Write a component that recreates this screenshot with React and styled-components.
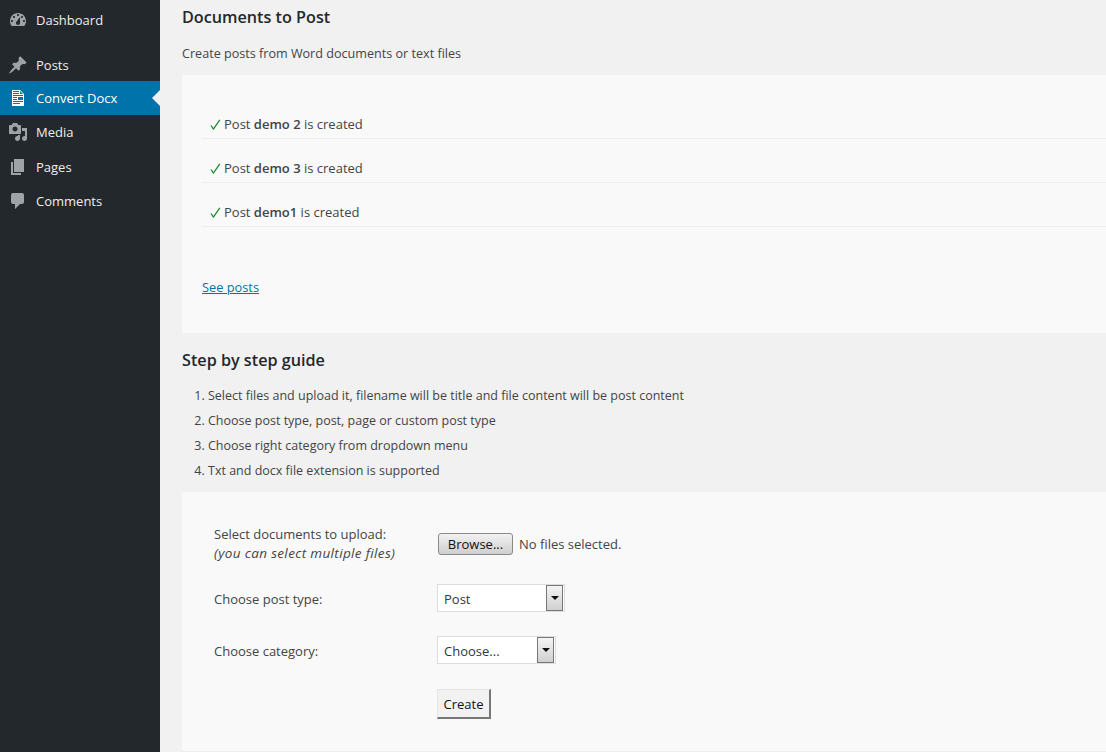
import React from 'react';
import styled, { createGlobalStyle } from 'styled-components';

const GlobalStyle = createGlobalStyle`
  html, body {
    margin: 0;
    padding: 0;
    height: 752px;
    overflow: hidden;
    background: #f1f1f1;
  }
  body {
    font-family: "Open Sans", "Noto Sans", sans-serif;
    font-size: 13px;
    color: #444;
  }
  * { box-sizing: border-box; }
`;

const Page = styled.div`
  display: flex;
  height: 752px;
`;

const Sidebar = styled.nav`
  width: 160px;
  flex: none;
  background: #23282d;
  padding-top: 3px;
`;

const MenuItem = styled.a`
  position: relative;
  display: flex;
  align-items: center;
  height: ${p => (p.$short ? '33px' : '34px')};
  padding-left: 8px;
  padding-top: ${p => p.$top || 0}px;
  margin-bottom: ${p => (p.$sep ? '11px' : '0')};
  background: ${p => (p.$active ? '#0073aa' : 'transparent')};
  color: ${p => (p.$active ? '#fff' : '#eee')};
  font-size: 13px;

  svg {
    width: 20px;
    height: 20px;
    margin-right: 8px;
    fill: ${p => (p.$active ? '#fff' : '#9ea3a8')};
  }
`;

const MenuArrow = styled.span`
  position: absolute;
  right: 0;
  top: 9px;
  border: 8px solid transparent;
  border-left-width: 0;
  border-right-color: #f1f1f1;
`;

const Main = styled.main`
  flex: 1;
  min-width: 0;
  padding-left: 22px;
`;

const Title = styled.h2`
  margin: 0;
  font-size: 16.2px;
  line-height: 22px;
  font-weight: 600;
  color: #23282d;
`;

const Intro = styled.p`
  margin: 17px 0 0;
  font-size: 12.6px;
  line-height: 18px;
  color: #444;
`;

const Header = styled.header`
  padding-top: 6px;
  height: 75px;
`;

const Card = styled.section`
  background: #f9f9f9;
  height: ${p => p.$h}px;
  padding: ${p => p.$pad};
  border-bottom: ${p => (p.$line ? '1px solid #eee' : 'none')};
`;

const Notice = styled.div`
  display: flex;
  align-items: center;
  gap: 3px;
  height: 44px;
  padding: 15px 0 0 8px;
  border-bottom: 1px solid #eeeeee;
  font-size: 13px;

  b { font-weight: 600; }
  svg { width: 11px; height: 11px; flex: none; }
`;

const SeePosts = styled.a`
  display: inline-block;
  margin-top: 51px;
  color: #0073aa;
  text-decoration: underline;
  font-size: 12.8px;
`;

const GuideHead = styled.div`
  height: 159px;
  padding-top: 16px;
`;

const Steps = styled.ol`
  margin: 12px 0 0;
  padding: 0 0 0 26px;
  font-size: 12.5px;
  line-height: 25px;
`;

const FormGrid = styled.div`
  display: grid;
  grid-template-columns: 223px 1fr;
  grid-auto-rows: min-content;
  align-items: center;
  font-size: 13px;
`;

const Label = styled.div`
  line-height: 19px;
  margin-bottom: ${p => p.$mb || 0}px;
  em {
    display: block;
    font-style: italic;
    font-size: 13.5px;
    letter-spacing: 0.35px;
  }
`;

const Control = styled.div`
  display: flex;
  align-items: center;
  margin-bottom: ${p => p.$mb || 0}px;
`;

const BrowseButton = styled.button`
  width: 75px;
  height: 22px;
  margin: 0 6px 0 1px;
  padding: 0;
  border: 1px solid #8a8a8a;
  border-radius: 3px;
  background: linear-gradient(#f2f2f2, #e0e0e0 50%, #cfcfcf);
  font: inherit;
  font-size: 13px;
  color: #111;
`;

const Select = styled.div`
  display: flex;
  align-items: center;
  justify-content: space-between;
  width: ${p => p.$w}px;
  height: 28px;
  margin: -1px 0 1px;
  padding: 1px 1px 1px 6px;
  background: #fff;
  border: 1px solid #ddd;
  color: #32373c;
`;

const SelectText = styled.span`
  padding-top: 2px;
`;

const SelectArrow = styled.span`
  display: flex;
  align-items: center;
  justify-content: center;
  width: 17px;
  height: 26px;
  border: 1px solid #777;
  background: linear-gradient(#f4f4f4, #d0d0d0);

  &::after {
    content: '';
    border: 4px solid transparent;
    border-top: 4px solid #111;
    border-bottom-width: 0;
  }
`;

const CreateButton = styled.button`
  width: 54px;
  height: 30px;
  padding: 0;
  border: 1px solid;
  border-color: #e6e6e6 #777 #777 #e6e6e6;
  border-width: 1px 2px 2px 1px;
  background: #f2f2f2;
  font: inherit;
  font-size: 13px;
  color: #111;
`;

const menu = [
  { label: 'Dashboard', sep: true, d: 'M3.76 16h12.48c1.1-1.37 1.76-3.11 1.76-5 0-4.42-3.58-8-8-8s-8 3.58-8 8c0 1.89.66 3.63 1.76 5zM10 4c.55 0 1 .45 1 1s-.45 1-1 1-1-.45-1-1 .45-1 1-1zM6 6c.55 0 1 .45 1 1s-.45 1-1 1-1-.45-1-1 .45-1 1-1zm8 0c.55 0 1 .45 1 1s-.45 1-1 1-1-.45-1-1 .45-1 1-1zm-5.37 5.55L12 7v6c0 1.1-.9 2-2 2s-2-.9-2-2c0-.57.24-1.08.63-1.45zM4 10c.55 0 1 .45 1 1s-.45 1-1 1-1-.45-1-1 .45-1 1-1zm12 0c.55 0 1 .45 1 1s-.45 1-1 1-1-.45-1-1 .45-1 1-1z' },
  { label: 'Posts', short: true, top: 1, d: 'M10.44 3.02l1.82-1.82 6.36 6.35-1.83 1.82c-1.05-.68-2.48-.57-3.41.36l-.75.75c-.92.93-1.04 2.35-.35 3.41l-1.83 1.82-2.41-2.41-2.8 2.79c-.42.42-3.38 2.71-3.8 2.29s1.86-3.39 2.28-3.81l2.79-2.79L4.1 9.36l1.83-1.82c1.05.69 2.48.57 3.41-.36l.75-.75c.93-.92 1.04-2.35.35-3.41z' },
  { label: 'Convert Docx', active: true, d: 'M12 2l4 4v12H4V2h8zM5 3v1h6V3H5zm7 3h3l-3-3v3zM5 5v1h6V5H5zm10 3V7H5v1h10zM5 9v1h4V9H5zm10 3V9h-5v3h5zM5 11v1h4v-1H5zm10 3v-1H5v1h10zm-3 2v-1H5v1h7z' },
  { label: 'Media', d: 'M13 11V4c0-.55-.45-1-1-1h-1.67L9 1H5L3.67 3H2c-.55 0-1 .45-1 1v7c0 .55.45 1 1 1h10c.55 0 1-.45 1-1zM7 4.5c1.38 0 2.5 1.12 2.5 2.5S8.38 9.5 7 9.5 4.5 8.38 4.5 7 5.62 4.5 7 4.5zM14 6h5v10.5c0 1.38-1.12 2.5-2.5 2.5S14 17.88 14 16.5s1.12-2.5 2.5-2.5c.17 0 .34.02.5.05V9h-3V6zm-4 8.05V13h2v3.5c0 1.38-1.12 2.5-2.5 2.5S7 17.88 7 16.5 8.12 14 9.5 14c.17 0 .34.02.5.05z' },
  { label: 'Pages', top: 2, d: 'M6 15V2h10v13H6zm-1 1h8v2H3V5h2v11z' },
  { label: 'Comments', top: 2, d: 'M5 2h9c1.1 0 2 .9 2 2v7c0 1.1-.9 2-2 2h-2l-5 5v-5H5c-1.1 0-2-.9-2-2V4c0-1.1.9-2 2-2z' },
];

const notices = ['demo 2', 'demo 3', 'demo1'];

const steps = [
  'Select files and upload it, filename will be title and file content will be post content',
  'Choose post type, post, page or custom post type',
  'Choose right category from dropdown menu',
  'Txt and docx file extension is supported',
];

const Check = () => (
  <svg viewBox="0 0 11 11">
    <path d="M1 6.5 L3.4 10 L9.8 0.8" fill="none" stroke="#1b8a2e" strokeWidth="1.3" />
  </svg>
);

const App = () => (
  <>
    <GlobalStyle />
    <Page>
      <Sidebar>
        {menu.map(item => (
          <MenuItem key={item.label} $sep={item.sep} $short={item.short} $top={item.top} $active={item.active}>
            <svg viewBox="0 0 20 20"><path d={item.d} /></svg>
            {item.label}
            {item.active && <MenuArrow />}
          </MenuItem>
        ))}
      </Sidebar>
      <Main>
        <Header>
          <Title>Documents to Post</Title>
          <Intro>Create posts from Word documents or text files</Intro>
        </Header>
        <Card $h={258} $pad="20px 0 0 20px">
          {notices.map(name => (
            <Notice key={name}>
              <Check />
              <span>Post <b>{name}</b> is created</span>
            </Notice>
          ))}
          <SeePosts>See posts</SeePosts>
        </Card>
        <GuideHead>
          <Title>Step by step guide</Title>
          <Steps>
            {steps.map(step => <li key={step}>{step}</li>)}
          </Steps>
        </GuideHead>
        <Card $h={260} $line $pad="33px 0 0 32px">
          <FormGrid>
            <Label $mb={22}>
              Select documents to upload:
              <em>(you can select multiple files)</em>
            </Label>
            <Control $mb={22}>
              <BrowseButton>Browse...</BrowseButton>
              No files selected.
            </Control>
            <Label $mb={24}>Choose post type:</Label>
            <Control $mb={24}>
              <Select $w={128}>
                <SelectText>Post</SelectText>
                <SelectArrow />
              </Select>
            </Control>
            <Label $mb={24}>Choose category:</Label>
            <Control $mb={24}>
              <Select $w={119}>
                <SelectText>Choose...</SelectText>
                <SelectArrow />
              </Select>
            </Control>
            <span />
            <Control>
              <CreateButton>Create</CreateButton>
            </Control>
          </FormGrid>
        </Card>
      </Main>
    </Page>
  </>
);

export default App;
